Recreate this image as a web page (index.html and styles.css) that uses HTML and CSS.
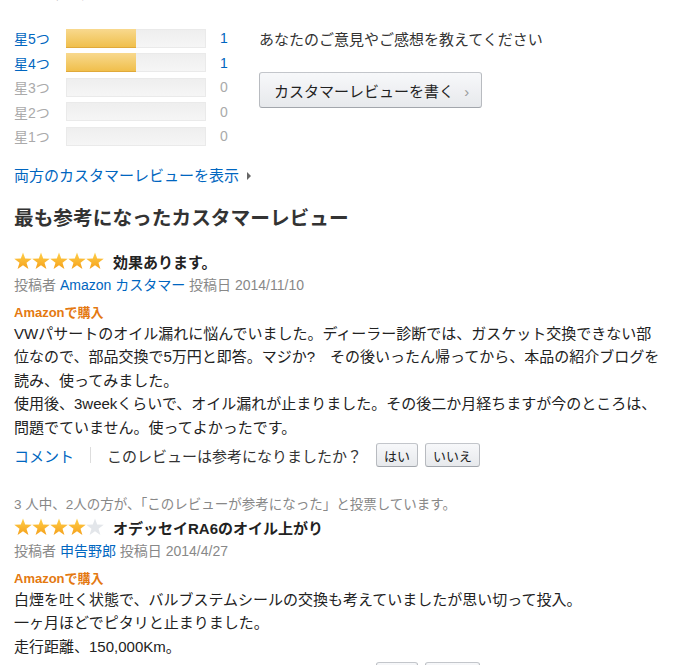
FILE: index.html
```html
<!DOCTYPE html>
<html lang="ja">
<head>
    <meta charset="UTF-8">
    <meta name="viewport" content="width=device-width, initial-scale=1.0">
    <title>カスタマーレビュー</title>
    <link rel="stylesheet" href="styles.css">
</head>
<body>
    <svg class="defs" width="0" height="0" aria-hidden="true">
        <defs>
            <linearGradient id="gold" x1="0" y1="0" x2="0" y2="1">
                <stop offset="0" stop-color="#ffd04a"/>
                <stop offset="1" stop-color="#f5a01a"/>
            </linearGradient>
            <polygon id="star" points="9,0.4 11.18,6.61 17.75,6.76 12.52,10.74 14.41,17.04 9,13.3 3.59,17.04 5.48,10.74 0.25,6.76 6.82,6.61"/>
        </defs>
    </svg>

    <h2 class="top-heading">カスタマーレビュー</h2>

    <!-- 評価の分布 -->
    <div class="summary">
        <div class="histogram">
            <div class="hist-row active">
                <span class="hist-label">星5つ</span>
                <span class="bar"><span class="bar-fill" style="width: 50%;"></span></span>
                <span class="hist-count">1</span>
            </div>
            <div class="hist-row active">
                <span class="hist-label">星4つ</span>
                <span class="bar"><span class="bar-fill" style="width: 50%;"></span></span>
                <span class="hist-count">1</span>
            </div>
            <div class="hist-row">
                <span class="hist-label">星3つ</span>
                <span class="bar"></span>
                <span class="hist-count">0</span>
            </div>
            <div class="hist-row">
                <span class="hist-label">星2つ</span>
                <span class="bar"></span>
                <span class="hist-count">0</span>
            </div>
            <div class="hist-row">
                <span class="hist-label">星1つ</span>
                <span class="bar"></span>
                <span class="hist-count">0</span>
            </div>
        </div>
        <div class="write-review">
            <p class="prompt">あなたのご意見やご感想を教えてください</p>
            <button class="btn-write">カスタマーレビューを書く <span class="chevron">›</span></button>
        </div>
    </div>

    <a class="see-all" href="#">両方のカスタマーレビューを表示<span class="caret"></span></a>

    <h2 class="section-title">最も参考になったカスタマーレビュー</h2>

    <!-- レビュー 1 -->
    <div class="review">
        <div class="review-head">
            <svg class="stars" width="90" height="18" viewBox="0 0 90 18">
                <use href="#star" fill="url(#gold)"/>
                <use href="#star" x="18" fill="url(#gold)"/>
                <use href="#star" x="36" fill="url(#gold)"/>
                <use href="#star" x="54" fill="url(#gold)"/>
                <use href="#star" x="72" fill="url(#gold)"/>
            </svg>
            <span class="review-title">効果あります。</span>
        </div>
        <div class="meta">投稿者 <a href="#">Amazon カスタマー</a> 投稿日 2014/11/10</div>
        <div class="badge">Amazonで購入</div>
        <p class="review-body">VWパサートのオイル漏れに悩んでいました。ディーラー診断では、ガスケット交換できない部位なので、部品交換で5万円と即答。マジか?　その後いったん帰ってから、本品の紹介ブログを読み、使ってみました。<br>使用後、3weekくらいで、オイル漏れが止まりました。その後二か月経ちますが今のところは、問題でていません。使ってよかったです。</p>
        <div class="feedback">
            <a href="#">コメント</a>
            <span class="divider"></span>
            <span class="question">このレビューは参考になりましたか？</span>
            <button class="btn-small">はい</button>
            <button class="btn-small">いいえ</button>
        </div>
    </div>

    <!-- レビュー 2 -->
    <div class="review">
        <div class="votes">3 人中、2人の方が、「このレビューが参考になった」と投票しています。</div>
        <div class="review-head">
            <svg class="stars" width="90" height="18" viewBox="0 0 90 18">
                <use href="#star" fill="url(#gold)"/>
                <use href="#star" x="18" fill="url(#gold)"/>
                <use href="#star" x="36" fill="url(#gold)"/>
                <use href="#star" x="54" fill="url(#gold)"/>
                <use href="#star" x="72" fill="#e3e6ea"/>
            </svg>
            <span class="review-title">オデッセイRA6のオイル上がり</span>
        </div>
        <div class="meta">投稿者 <a href="#">申告野郎</a> 投稿日 2014/4/27</div>
        <div class="badge">Amazonで購入</div>
        <p class="review-body">白煙を吐く状態で、バルブステムシールの交換も考えていましたが思い切って投入。<br>一ヶ月ほどでピタリと止まりました。<br>走行距離、150,000Km。</p>
        <div class="feedback">
            <a href="#">コメント</a>
            <span class="divider"></span>
            <span class="question">このレビューは参考になりましたか？</span>
            <button class="btn-small">はい</button>
            <button class="btn-small">いいえ</button>
        </div>
    </div>
</body>
</html>
```

FILE: styles.css
```css
body {
    margin: 0;
    padding: 0 14px;
    font-family: "Liberation Sans", "Noto Sans CJK JP", sans-serif;
    color: #222;
    background: #fff;
    overflow: hidden;
}
a {
    color: #0066c0;
    text-decoration: none;
}
.defs {
    position: absolute;
}
.top-heading {
    margin: -18px 0 0;
    font-size: 19px;
    line-height: 22px;
    color: #777;
}
.summary {
    display: flex;
    margin-top: 22px;
}
.histogram {
    width: 245px;
}
.hist-row {
    display: flex;
    align-items: center;
    height: 24.5px;
    font-size: 14px;
    color: #aaa;
}
.hist-row.active {
    color: #0066c0;
}
.hist-label {
    width: 52px;
}
.bar {
    width: 140px;
    height: 19px;
    background: linear-gradient(#eee, #f6f6f6);
    box-shadow: inset 0 0 0 1px #eaeaea;
}
.bar-fill {
    display: block;
    height: 100%;
    background: linear-gradient(#f8d98e, #f0bf4c);
    border-bottom: 1px solid #e0a93a;
    box-sizing: border-box;
}
.hist-count {
    margin-left: 14px;
}
.write-review {
    padding-top: 4px;
}
.prompt {
    margin: 0;
    font-size: 15px;
    line-height: 20px;
    color: #333;
}
.btn-write {
    margin-top: 22px;
    height: 36px;
    padding: 0 12px 0 14px;
    font-family: inherit;
    font-size: 15px;
    color: #222;
    background: linear-gradient(#f7f8fa, #e7e9ec);
    border: 1px solid #adb1b8;
    border-color: #c3c6cb #b8bbc0 #a2a6ac;
    border-radius: 3px;
}
.chevron {
    margin-left: 6px;
    color: #999;
}
.see-all {
    display: block;
    margin-top: 17.5px;
    font-size: 15px;
    line-height: 20px;
}
.caret {
    display: inline-block;
    margin-left: 8px;
    border-left: 4px solid #666;
    border-top: 4px solid transparent;
    border-bottom: 4px solid transparent;
    vertical-align: 1px;
}
.section-title {
    margin: 20px 0 0;
    font-size: 19.7px;
    line-height: 24px;
    color: #333;
}
.review-head {
    display: flex;
    align-items: center;
    height: 24px;
}
.section-title + .review .review-head {
    margin-top: 19px;
}
.stars {
    margin-right: 9px;
}
.review-title {
    font-size: 15px;
    font-weight: bold;
    color: #222;
}
.meta {
    font-size: 14px;
    line-height: 24px;
    color: #888;
}
.badge {
    margin-top: 6.5px;
    font-size: 13px;
    line-height: 18px;
    font-weight: bold;
    color: #e47911;
}
.review-body {
    max-width: 651px;
    margin: 0;
    font-size: 15px;
    line-height: 23.5px;
    color: #222;
}
.feedback {
    display: flex;
    align-items: center;
    height: 24px;
    margin-top: 4px;
    font-size: 15px;
}
.divider {
    width: 1px;
    height: 16px;
    margin: 0 16px;
    background: #ddd;
}
.question {
    color: #333;
    margin-right: 14px;
}
.btn-small {
    height: 24px;
    padding: 0 7px;
    margin-right: 7px;
    font-family: inherit;
    font-size: 13px;
    color: #222;
    background: linear-gradient(#f7f8fa, #e7e9ec);
    border: 1px solid #adb1b8;
    border-color: #c3c6cb #b8bbc0 #a2a6ac;
    border-radius: 3px;
}
.votes {
    margin-top: 28px;
    font-size: 13.5px;
    line-height: 20px;
    color: #888;
}
```
